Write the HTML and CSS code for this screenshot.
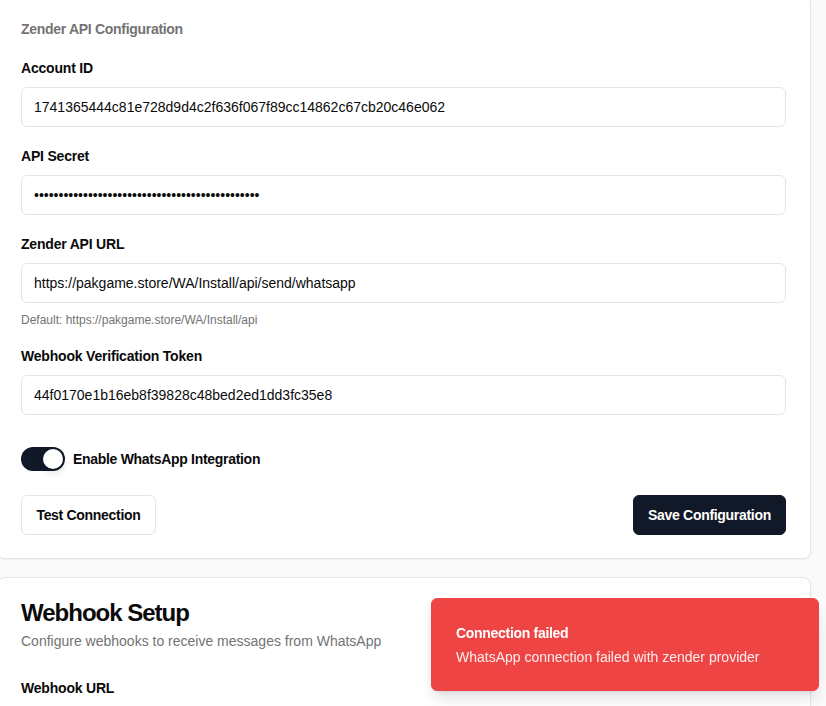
FILE: index.html
```html
<!DOCTYPE html>
<html lang="en">
<head>
<meta charset="utf-8">
<title>WhatsApp Settings</title>
<link rel="stylesheet" href="styles.css">
</head>
<body>
<div class="page">
  <section class="card card-config">
    <h3 class="section-title">Zender API Configuration</h3>
    <div class="field">
      <label class="label" for="acc">Account ID</label>
      <input class="input" id="acc" type="text" value="1741365444c81e728d9d4c2f636f067f89cc14862c67cb20c46e062">
    </div>
    <div class="field">
      <label class="label" for="sec">API Secret</label>
      <input class="input" id="sec" type="password" value="abcdefghijabcdefghijabcdefghijabcdefghijabcdef">
    </div>
    <div class="field">
      <label class="label" for="url">Zender API URL</label>
      <input class="input" id="url" type="text" value="https://pakgame.store/WA/Install/api/send/whatsapp">
      <p class="help">Default: https://pakgame.store/WA/Install/api</p>
    </div>
    <div class="field field-last">
      <label class="label" for="tok">Webhook Verification Token</label>
      <input class="input" id="tok" type="text" value="44f0170e1b16eb8f39828c48bed2ed1dd3fc35e8">
    </div>
    <div class="toggle-row">
      <span class="switch"><span class="thumb"></span></span>
      <span class="toggle-label">Enable WhatsApp Integration</span>
    </div>
    <div class="actions">
      <button class="btn btn-outline">Test Connection</button>
      <button class="btn btn-primary">Save Configuration</button>
    </div>
  </section>

  <section class="card card-webhook">
    <h2 class="card-title">Webhook Setup</h2>
    <p class="card-desc">Configure webhooks to receive messages from WhatsApp</p>
    <label class="label label-webhook">Webhook URL</label>
  </section>
</div>

<div class="toast">
  <div class="toast-title">Connection failed</div>
  <div class="toast-desc">WhatsApp connection failed with zender provider</div>
</div>
</body>
</html>
```

FILE: styles.css
```css
* { box-sizing: border-box; }
html, body { margin: 0; padding: 0; }
body {
  background: #fafafa;
  font-family: "Segoe UI", "Liberation Sans", "Noto Sans", sans-serif;
  color: #0a0a0a;
  overflow: hidden;
  height: 706px;
}
.page {
  display: flex;
  flex-direction: column;
  gap: 18px;
  margin-left: -3px;
  margin-top: -5px;
  width: 814px;
}
.card {
  background: #fff;
  border: 1px solid #e5e5e5;
  border-radius: 8px;
  box-shadow: 0 1px 2px rgba(0,0,0,0.05);
  padding: 23px 24px 23px 23px;
}
.section-title {
  margin: 0 0 19px;
  font-size: 14px;
  line-height: 20px;
  font-weight: 700;
  letter-spacing: -0.3px;
  color: #737373;
}
.field { display: flex; flex-direction: column; margin-bottom: 19px; }
.field-last { margin-bottom: 32px; }
.label {
  font-size: 14px;
  line-height: 20px;
  font-weight: 700;
  letter-spacing: -0.2px;
  margin-bottom: 9px;
  display: block;
}
.input {
  height: 40px;
  width: 100%;
  border: 1px solid #e5e5e5;
  border-radius: 6px;
  padding: 0 12px;
  font-family: inherit;
  font-size: 14px;
  color: #0a0a0a;
  background: #fff;
  outline: none;
}
.help {
  margin: 9px 0 -1px;
  font-size: 12px;
  line-height: 16px;
  color: #737373;
}
.toggle-row {
  display: flex;
  align-items: center;
  gap: 8px;
  margin-bottom: 24px;
}
.switch {
  width: 44px;
  height: 24px;
  border-radius: 12px;
  background: #111827;
  position: relative;
  display: inline-block;
  flex: none;
}
.thumb {
  position: absolute;
  top: 2px;
  left: 22px;
  width: 20px;
  height: 20px;
  border-radius: 50%;
  background: #fff;
  box-shadow: 0 4px 8px rgba(0,0,0,0.12);
}
.toggle-label { font-size: 14px; font-weight: 700; line-height: 20px; letter-spacing: -0.3px; }
.actions { display: flex; justify-content: space-between; }
.btn {
  height: 40px;
  padding: 0;
  border-radius: 6px;
  font-family: inherit;
  font-size: 14px;
  font-weight: 700;
  letter-spacing: -0.3px;
  white-space: nowrap;
  cursor: pointer;
}
.btn-outline { background: #fff; border: 1px solid #e5e5e5; color: #0a0a0a; width: 135px; }
.btn-primary { background: #111827; border: 1px solid #111827; color: #fff; width: 153px; }
.card-webhook { padding-top: 23px; }
.card-title {
  margin: 0;
  font-size: 24px;
  line-height: 24px;
  font-weight: 700;
  letter-spacing: -1px;
}
.card-desc {
  margin: 6px 0 0;
  font-size: 14px;
  line-height: 20px;
  color: #737373;
}
.label-webhook { margin-top: 27px; }
.toast {
  position: fixed;
  left: 431px;
  top: 598px;
  width: 388px;
  height: 93px;
  background: #ef4444;
  border: 1px solid #ef4444;
  border-radius: 6px;
  color: #fff;
  padding: 24px 24px;
  box-shadow: 0 10px 15px -3px rgba(0,0,0,0.12), 0 4px 6px -4px rgba(0,0,0,0.1);
}
.toast-title { font-size: 14px; line-height: 20px; font-weight: 700; letter-spacing: -0.3px; }
.toast-desc { font-size: 14px; line-height: 20px; opacity: 0.9; margin-top: 4px; }
```
